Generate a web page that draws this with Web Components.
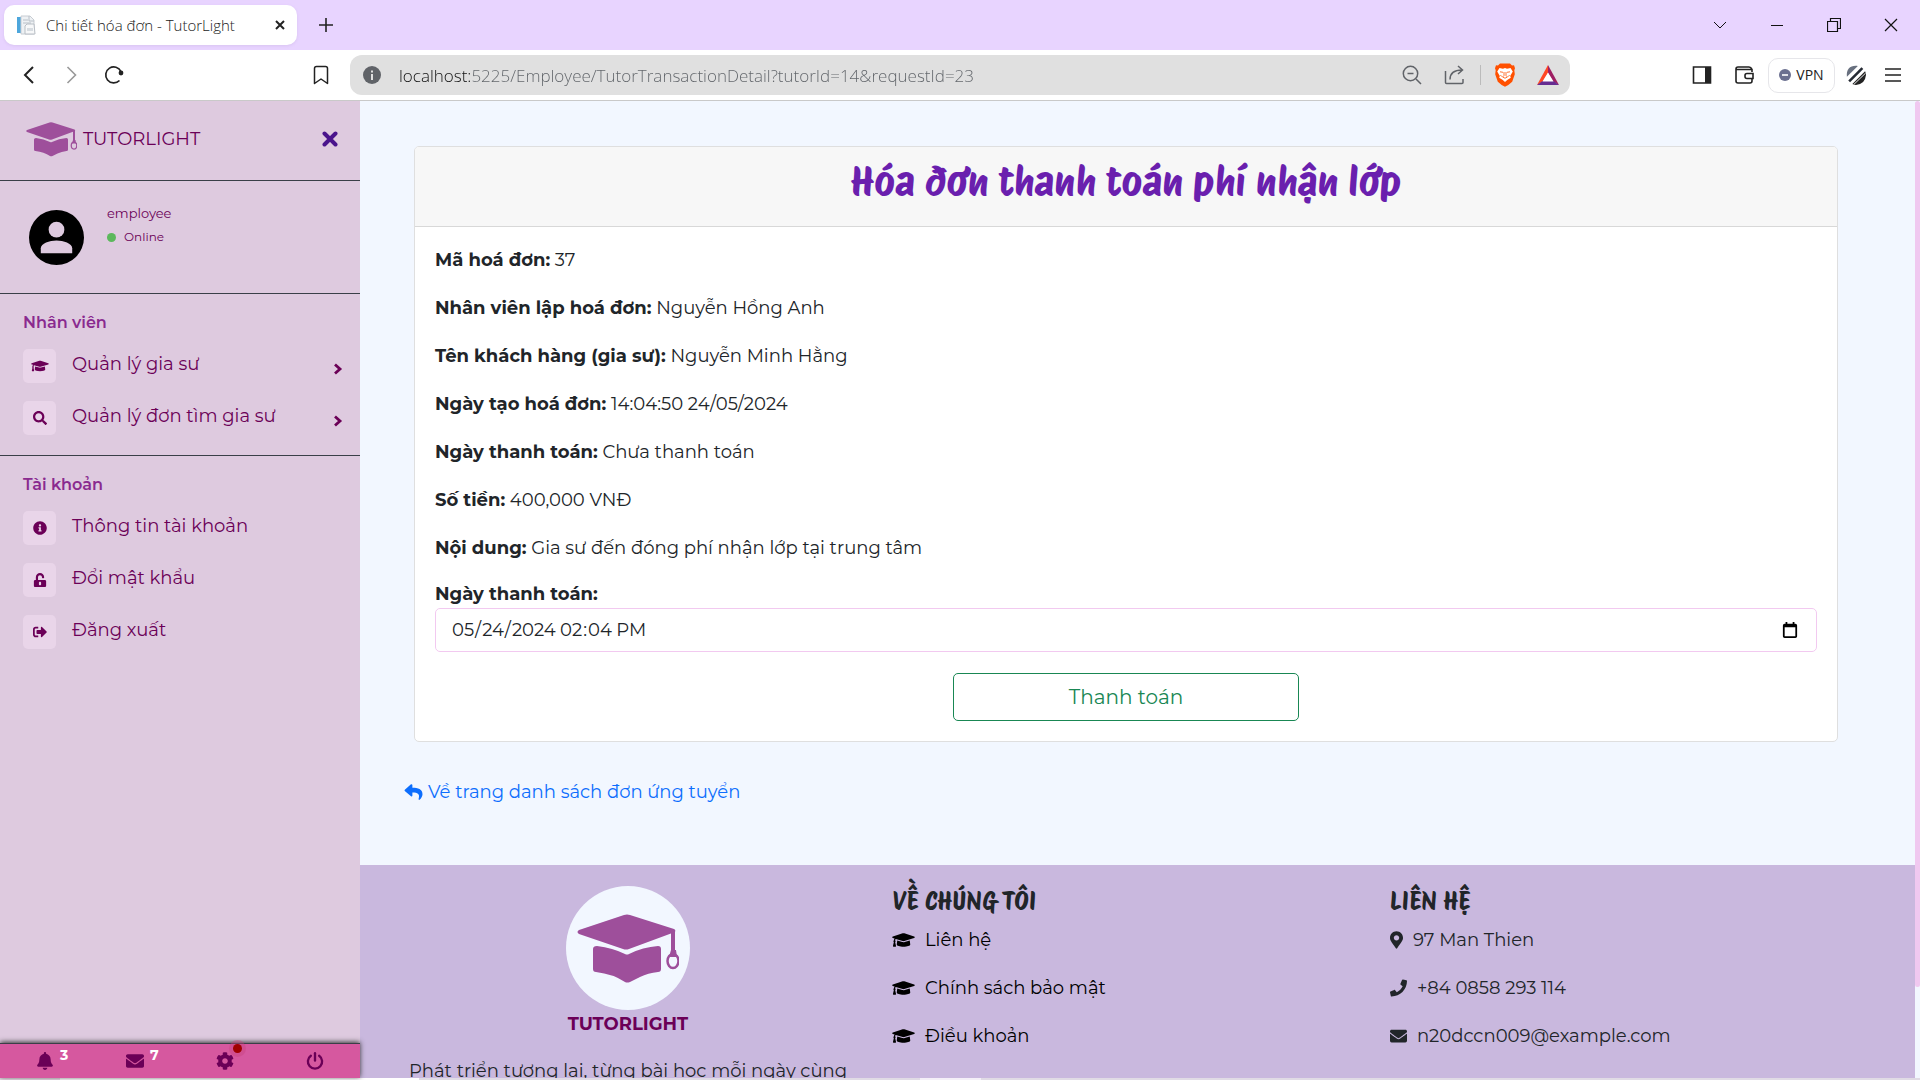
<!DOCTYPE html>
<html lang="vi">
<head>
<meta charset="utf-8">
<title>Chi tiết hóa đơn - TutorLight</title>
<style>
  html, body { margin: 0; height: 100%; }
  body {
    --body-font: Montserrat, Inter, "Noto Sans", sans-serif;
    --chrome-font: "Segoe UI", "Open Sans", "Noto Sans", sans-serif;
    --display-font: "Protest Riot", "Open Sans", sans-serif;
    --plum: #6b0057;
    display: flex; flex-direction: column; height: 100vh; overflow: hidden;
    font: 400 18px/28px var(--body-font); color: #212529; background: #f2f7ff;
  }
  .page { flex: 1; min-height: 0; display: flex; }
  .content { flex: 1; min-width: 0; overflow: hidden; display: flex; flex-direction: column; }
  .taskbar { height: 2px; flex: none; background: linear-gradient(90deg, #eadfe8 60px, #fff 60px 419px, #e0dbe5 419px 920px, #f4f0f8 920px 981px, #e0dbe5 981px); }
</style>
</head>
<body>
<browser-tabs>Chi tiết hóa đơn - TutorLight</browser-tabs>
<browser-toolbar url="localhost:5225/Employee/TutorTransactionDetail?tutorId=14&amp;requestId=23"></browser-toolbar>
<div class="page">
  <side-bar>
    <side-section heading="Nhân viên">
      <side-item icon="cap" more>Quản lý gia sư</side-item>
      <side-item icon="search" more>Quản lý đơn tìm gia sư</side-item>
    </side-section>
    <side-section heading="Tài khoản">
      <side-item icon="info">Thông tin tài khoản</side-item>
      <side-item icon="unlock">Đổi mật khẩu</side-item>
      <side-item icon="logout">Đăng xuất</side-item>
    </side-section>
  </side-bar>
  <div class="content">
    <invoice-card>
      <span slot="title">Hóa đơn thanh toán phí nhận lớp</span>
      <invoice-row label="Mã hoá đơn:">37</invoice-row>
      <invoice-row label="Nhân viên lập hoá đơn:">Nguyễn Hồng Anh</invoice-row>
      <invoice-row label="Tên khách hàng (gia sư):">Nguyễn Minh Hằng</invoice-row>
      <invoice-row label="Ngày tạo hoá đơn:">14:04:50 24/05/2024</invoice-row>
      <invoice-row label="Ngày thanh toán:">Chưa thanh toán</invoice-row>
      <invoice-row label="Số tiền:">400,000 VNĐ</invoice-row>
      <invoice-row label="Nội dung:">Gia sư đến đóng phí nhận lớp tại trung tâm</invoice-row>
    </invoice-card>
    <back-link>Về trang danh sách đơn ứng tuyển</back-link>
    <site-footer></site-footer>
  </div>
  <page-scrollbar></page-scrollbar>
</div>
<div class="taskbar"></div>

<script>
const ICONS = {
  cap: ['0 0 640 512', '<path d="M622.34 153.2L343.4 67.5c-15.2-4.67-31.6-4.67-46.79 0L17.66 153.2c-23.54 7.23-23.54 38.36 0 45.59l48.63 14.94c-10.67 13.19-17.23 29.28-17.88 46.9C38.78 266.15 32 276.11 32 288c0 10.78 5.68 19.85 13.86 25.65L20.33 428.53C18.11 438.52 25.71 448 35.94 448h56.11c10.24 0 17.84-9.48 15.62-19.47L82.14 313.65C90.32 307.85 96 298.78 96 288c0-11.57-6.47-21.25-15.66-26.87.76-15.02 8.44-28.3 20.69-36.72L296.6 284.5c9.06 2.78 26.44 6.25 46.79 0l278.95-85.7c23.55-7.24 23.55-38.36 0-45.6zM352.79 315.09c-28.53 8.76-52.84 3.92-65.59 0l-145.02-44.55L128 384c0 35.35 85.96 64 192 64s192-28.65 192-64l-14.18-113.47-145.03 44.56z"/>'],
  search: ['0 0 512 512', '<path d="M505 442.7L405.3 343c-4.5-4.5-10.6-7-17-7H372c27.6-35.3 44-79.7 44-128C416 93.1 322.9 0 208 0S0 93.1 0 208s93.1 208 208 208c48.3 0 92.7-16.4 128-44v16.3c0 6.4 2.5 12.5 7 17l99.7 99.7c9.4 9.4 24.6 9.4 33.9 0l28.3-28.3c9.4-9.4 9.4-24.6.1-34zM208 336c-70.7 0-128-57.2-128-128 0-70.7 57.2-128 128-128 70.7 0 128 57.2 128 128 0 70.7-57.2 128-128 128z"/>'],
  info: ['0 0 512 512', '<path d="M256 8C119.043 8 8 119.083 8 256c0 136.997 111.043 248 248 248s248-111.003 248-248C504 119.083 392.957 8 256 8zm0 110c23.196 0 42 18.804 42 42s-18.804 42-42 42-42-18.804-42-42 18.804-42 42-42zm56 254c0 6.627-5.373 12-12 12h-88c-6.627 0-12-5.373-12-12v-24c0-6.627 5.373-12 12-12h12v-64h-12c-6.627 0-12-5.373-12-12v-24c0-6.627 5.373-12 12-12h64c6.627 0 12 5.373 12 12v100h12c6.627 0 12 5.373 12 12v24z"/>'],
  unlock: ['0 0 448 512', '<path fill-rule="evenodd" d="M400 256H152v-104c0-40 32-72 71-72.500c40-.5 73 32 73 72v16c0 13.300 10.700 24 24 24h32c13.300 0 24-10.700 24-24v-16C376 68 307.500-.3 223.500 0 139.500.3 72 69.500 72 153.500V256H48c-26.500 0-48 21.500-48 48v160c0 26.500 21.500 48 48 48h352c26.500 0 48-21.500 48-48V304c0-26.500-21.500-48-48-48zM264 408c0 22.100-17.900 40-40 40s-40-17.900-40-40v-48c0-22.100 17.900-40 40-40s40 17.900 40 40v48z"/>'],
  logout: ['0 0 512 512', '<path d="M497 273L329 441c-15 15-41 4.500-41-17v-96H152c-13.300 0-24-10.700-24-24v-96c0-13.300 10.700-24 24-24h136V88c0-21.400 25.900-32 41-17l168 168c9.300 9.400 9.300 24.600 0 34zM192 436v-40c0-6.600-5.400-12-12-12H96c-17.700 0-32-14.300-32-32V160c0-17.700 14.300-32 32-32h84c6.600 0 12-5.400 12-12V76c0-6.600-5.400-12-12-12H96c-53 0-96 43-96 96v192c0 53 43 96 96 96h84c6.600 0 12-5.400 12-12z"/>'],
  bell: ['0 0 448 512', '<path d="M224 512c35.32 0 63.97-28.65 63.97-64H160.03c0 35.35 28.65 64 63.97 64zm215.39-149.71c-19.32-20.76-55.47-51.99-55.47-154.29 0-77.7-54.48-139.9-127.94-155.16V32c0-17.67-14.32-32-31.98-32s-31.98 14.33-31.98 32v20.84C118.56 68.1 64.08 130.3 64.08 208c0 102.3-36.15 133.53-55.47 154.29-6 6.45-8.66 14.16-8.61 21.71.11 16.4 12.98 32 32.1 32h383.8c19.12 0 32-15.6 32.1-32 .05-7.55-2.61-15.27-8.61-21.71z"/>'],
  mail: ['0 0 512 512', '<path d="M502.3 190.8c3.9-3.1 9.7-.2 9.7 4.7V400c0 26.5-21.5 48-48 48H48c-26.500 0-48-21.500-48-48V195.600c0-5 5.700-7.800 9.700-4.700 22.400 17.400 52.100 39.500 154.100 113.600 21.100 15.400 56.700 47.800 92.200 47.600 35.700.3 72-32.800 92.300-47.600 102-74.100 131.600-96.300 154-113.700zM256 320c23.200.4 56.600-29.200 73.400-41.400 132.700-96.300 142.800-104.700 173.400-128.700 5.800-4.500 9.200-11.500 9.200-18.900v-19c0-26.500-21.500-48-48-48H48c-26.500 0-48 21.500-48 48v19c0 7.400 3.400 14.300 9.200 18.900 30.600 23.900 40.700 32.400 173.400 128.700 16.800 12.200 50.200 41.800 73.400 41.400z"/>'],
  cog: ['0 0 512 512', '<path d="M487.400 315.700l-42.600-24.600c4.300-23.200 4.300-47 0-70.200l42.600-24.600c4.900-2.800 7.100-8.600 5.500-14-11.100-35.600-30-67.800-54.700-94.600-3.800-4.100-10-5.100-14.800-2.300L380.800 110c-17.900-15.400-38.500-27.300-60.800-35.100V25.800c0-5.600-3.900-10.500-9.400-11.700-36.700-8.200-74.300-7.800-109.200 0-5.500 1.200-9.400 6.100-9.400 11.700V75c-22.200 7.900-42.800 19.800-60.800 35.100L88.700 85.500c-4.900-2.800-11-1.900-14.800 2.300-24.700 26.700-43.600 58.900-54.700 94.600-1.700 5.400.6 11.200 5.500 14L67.300 221c-4.300 23.200-4.300 47 0 70.200l-42.600 24.600c-4.900 2.800-7.100 8.600-5.500 14 11.100 35.600 30 67.800 54.700 94.600 3.800 4.100 10 5.100 14.800 2.300l42.600-24.600c17.900 15.400 38.500 27.300 60.800 35.100v49.200c0 5.600 3.900 10.500 9.400 11.700 36.700 8.200 74.300 7.800 109.200 0 5.500-1.200 9.400-6.100 9.400-11.700v-49.200c22.200-7.900 42.800-19.800 60.800-35.100l42.600 24.600c4.900 2.800 11 1.900 14.800-2.300 24.700-26.700 43.600-58.900 54.700-94.600 1.500-5.500-.7-11.300-5.600-14.100zM256 336c-44.100 0-80-35.900-80-80s35.900-80 80-80 80 35.900 80 80-35.900 80-80 80z"/>'],
  power: ['0 0 20 20', '<g fill="none" stroke="currentColor" stroke-width="2.600" stroke-linecap="round"><path d="M5.400 4.200a7.900 7.900 0 1 0 9.200 0"/><path d="M10 1.400v8"/></g>'],
  pin: ['0 0 384 512', '<path d="M172.268 501.670C26.970 291.031 0 269.413 0 192 0 85.961 85.961 0 192 0s192 85.961 192 192c0 77.413-26.970 99.031-172.268 309.670-9.535 13.774-29.930 13.773-39.464 0zM192 272c44.183 0 80-35.817 80-80s-35.817-80-80-80-80 35.817-80 80 35.817 80 80 80z"/>'],
  phone: ['0 0 512 512', '<path d="M493.400 24.600l-104-24c-11.300-2.600-22.900 3.300-27.500 13.900l-48 112c-4.200 9.800-1.400 21.300 6.900 28l60.600 49.600c-36 76.700-98.900 140.500-177.200 177.200l-49.600-60.600c-6.800-8.300-18.200-11.100-28-6.900l-112 48C3.900 366.500-2 378.100.6 389.400l24 104C27.100 504.200 36.700 512 48 512c256.100 0 464-207.500 464-464 0-11.200-7.700-20.900-18.600-23.400z"/>'],
  reply: ['0 0 512 512', '<path d="M8.309 189.836L184.313 37.851C199.719 24.546 224 35.347 224 56.015v80.053c160.629 1.839 288 34.032 288 186.258 0 61.441-39.581 122.309-83.333 154.132-13.653 9.931-33.111-2.533-28.077-18.631 45.344-145.012-21.507-183.510-176.590-185.742V360c0 20.700-24.300 31.453-39.687 18.164l-176.004-152c-11.071-9.562-11.086-26.753 0-36.328z"/>'],
  chevron: ['0 0 12 14', '<path d="M3 2.500L8 7l-5 4.500" fill="none" stroke="currentColor" stroke-width="2.800"/>'],
  times: ['0 0 16 16', '<path d="M2.500 2.500l11 11m0-11l-11 11" fill="none" stroke="currentColor" stroke-width="4" stroke-linecap="round"/>'],
  calendar: ['0 0 16 18', '<path fill-rule="evenodd" d="M3 0h2v2h6V0h2v2h1q2 0 2 2v12q0 2-2 2H2q-2 0-2-2V4q0-2 2-2h1zM2 6v10h12V6z"/>'],
  logo: ['0 0 102 72', '<path d="M2 18L47 3q3-1 6 0l44 14q2 1 1 3l-46 17q-3 1-6 0L2 22q-3-2 0-4z"/><path d="M16 37q0-3 4-3 16 2 28 8 2 1 4 0 14-7 29-8 3 0 3 3v20q0 3-3 3-10 1-18 5l-10 5q-3 1-5 0-12-8-29-10-3 0-3-3z"/><path d="M96 19v22" fill="none" stroke="currentColor" stroke-width="4"/><path d="M94 38h5l1 7h-8z"/><ellipse cx="96" cy="49" rx="5.500" ry="7" fill="none" stroke="currentColor" stroke-width="2.500"/>'],
  avatar: ['0 0 56 56', '<circle cx="28" cy="28" r="28" fill="#000"/><circle cx="28" cy="20" r="8" fill="#decadf"/><path d="M12 44v-5c0-5 9-8 16-8s16 3 16 8v5z" fill="#decadf"/>'],
  files: ['0 0 20 20', '<path d="M1 2h4v16H1z" fill="#4da6dc"/><path d="M5 1h9l4 4v14H5z" fill="#eef1f4" stroke="#c7ccd2"/><path d="M13 1v5h5M7 5h5M7 8h8" fill="none" stroke="#b9c0c8"/><path d="M9 11l2-2h7l1 10H9z" fill="#f7f8f9" stroke="#b8bec5"/><path d="M11 13h6v3h-6z" fill="#d7dce1"/>'],
  tabclose: ['0 0 10 10', '<path d="M1 1l8 8M9 1L1 9" fill="none" stroke="currentColor" stroke-width="2"/>'],
  plus: ['0 0 16 16', '<path d="M8 1v14M1 8h14" fill="none" stroke="currentColor" stroke-width="1.600"/>'],
  down: ['0 0 14 14', '<path d="M1 4l6 6 6-6" fill="none" stroke="currentColor" stroke-width="1"/>'],
  min: ['0 0 14 14', '<path d="M1 7.500h12" stroke="currentColor"/>'],
  restore: ['0 0 14 14', '<path d="M.5 3.500h10v10H.5zM3.500 3.500v-3h10v10h-3" fill="none" stroke="currentColor" stroke-width="1.200"/>'],
  close: ['0 0 14 14', '<path d="M1 1l12 12M13 1L1 13" fill="none" stroke="currentColor" stroke-width="1.200"/>'],
  back: ['0 0 20 20', '<path d="M13 2L5 10l8 8" fill="none" stroke="currentColor" stroke-width="2"/>'],
  forward: ['0 0 20 20', '<path d="M5.500 2l8 8-8 8" fill="none" stroke="currentColor" stroke-width="1.600"/>'],
  reload: ['0 0 20 20', '<path d="M15.500 15.500A8 8 0 1 1 17 6.500" fill="none" stroke="currentColor" stroke-width="1.700"/><circle cx="17" cy="8" r="2.400"/>'],
  bookmark: ['0 0 20 20', '<path d="M3.500 18.500v-15q0-2 2-2h9q2 0 2 2v15L10 14z" fill="none" stroke="currentColor" stroke-width="1.500" stroke-linejoin="round"/>'],
  site: ['0 0 18 18', '<circle cx="9" cy="9" r="9"/><path d="M9 4.500v2M9 8v6" stroke="#e0e0e0" stroke-width="2"/>'],
  zoom: ['0 0 20 20', '<g fill="none" stroke="currentColor" stroke-width="1.500"><circle cx="8.500" cy="8.500" r="7.200"/><path d="M5.500 8.500h6M14 14l5 5"/></g>'],
  share: ['0 0 20 20', '<g fill="none" stroke="currentColor" stroke-width="1.500"><path d="M1.500 6v11.500q0 1 1 1h15.500q1 0 1-1V14"/><path d="M6 14.500c0-7 4-9.500 12-9.500M14 1l4.500 4L14 9"/></g>'],
  brave: ['0 0 20 24', '<path d="M5 .5h10l2 2 2-.2 1 3-.7 2 .5 4-2.600 7.500Q14 22 10 23.800 6 22 2.800 18.800L.2 11.300l.5-4L0 5.300l1-3 2 .2z" fill="#ff5000"/><path d="M4.500 5l3.500.8 2-.8 2 .8 3.500-.8 2.300 3.500-2.600 4.500.6 1.800-3.600 2.200L10 19l-2.200-2-3.600-2.200.6-1.800-2.600-4.500z" fill="#fff"/><path d="M5 8.800l3 .5M15 8.800l-3 .5M9 9v3.500L7.500 14l2.500 1.200 2.500-1.200-1.500-1.500V9M5.500 12l1 1.500M14.500 12l-1 1.500" fill="none" stroke="#ff5000" stroke-width=".8"/>'],
  bat: ['0 0 22 20', '<path d="M11 0L0 20l6-3.500L11 8z" fill="#ff4724"/><path d="M11 0l11 20-6-3.500L11 8z" fill="#9e1f63"/><path d="M0 20h22l-5.500-4h-11z" fill="#662d91"/><path d="M11 7.500l5.500 9h-11z" fill="#fff"/>'],
  panel: ['0 0 20 20', '<path d="M1.500 2h17v16h-17z" fill="none" stroke="currentColor" stroke-width="1.600"/><path d="M13 2h6v16h-6z"/>'],
  wallet: ['0 0 20 20', '<g fill="none" stroke="currentColor" stroke-width="1.600"><path d="M18 7V4.500H2V16q0 2 2 2h12q2 0 2-2v-2M2 5V4q0-2 2-2h11q2 0 3 2.500"/><path d="M19 8.500h-6q-2 0-2 2v1q0 2 2 2h6z"/></g>'],
  vpn: ['0 0 12 12', '<circle cx="6" cy="6" r="6" fill="#6b7090"/><path d="M3 6h6" stroke="#fff" stroke-width="1.600"/>'],
  leo: ['0 0 22 22', '<path d="M1 13C0 4 5 0 13 1z" fill="#68707f"/><path d="M2.500 17L17 2.500q1.500 1 2 2L4.500 19z" fill="#252a33"/><path d="M7 21L21 7q1 2 1 4-1 10-11 11-2 0-4-1z"/><path d="M8.500 21.500L21.500 9" stroke="#fff" stroke-width="1"/>'],
  menu: ['0 0 18 16', '<path d="M1 2h16M1 8h16M1 14h16" stroke="currentColor" stroke-width="1.600"/>'],
};

class UiIcon extends HTMLElement {
  constructor() { super(); this.attachShadow({ mode: 'open' }); }
  connectedCallback() {
    const [box, art] = ICONS[this.getAttribute('name')];
    this.shadowRoot.innerHTML = `<style>:host{display:inline-flex;flex:none;width:16px;height:16px}svg{width:100%;height:100%;fill:currentColor}</style><svg viewBox="${box}" aria-hidden="true">${art}</svg>`;
  }
}
customElements.define('ui-icon', UiIcon);

function define(name, render) {
  customElements.define(name, class extends HTMLElement {
    constructor() { super(); this.attachShadow({ mode: 'open' }); }
    connectedCallback() {
      this.shadowRoot.innerHTML = '<style>*{box-sizing:border-box}button{font:inherit;color:inherit;border:0;background:none;padding:0;display:flex;align-items:center;justify-content:center}a{color:inherit;text-decoration:none}h1,h2,h3,p,ul{margin:0;padding:0;list-style:none}</style>' + render(this);
    }
  });
}

define('browser-tabs', () => `<style>
  :host{display:flex;flex:none;height:50px;box-sizing:border-box;padding:5px 22px 5px 4px;align-items:center;background:#e8d4ff;color:#222;font:350 15px/20px var(--chrome-font)}
  .tab{display:flex;align-items:center;width:293px;height:40px;padding:0 12px;background:#fff;border-radius:10px;box-shadow:0 1px 3px #bda8d855}
  .tab span{flex:1;margin-left:10px}
  .tab ui-icon{width:20px;height:20px}.tab button ui-icon{width:10px;height:10px}
  .new{margin-left:21px}
  .win{margin-left:auto;display:flex;gap:43px;color:#111}.win ui-icon{width:14px;height:14px}
</style><div class="tab"><ui-icon name="files"></ui-icon><span><slot></slot></span><button aria-label="Close tab"><ui-icon name="tabclose"></ui-icon></button></div>
<button class="new" aria-label="New tab"><ui-icon name="plus"></ui-icon></button>
<div class="win"><button aria-label="Search tabs"><ui-icon name="down"></ui-icon></button><button aria-label="Minimize"><ui-icon name="min"></ui-icon></button><button aria-label="Restore"><ui-icon name="restore"></ui-icon></button><button aria-label="Close"><ui-icon name="close"></ui-icon></button></div>`);

define('browser-toolbar', el => `<style>
  :host{display:flex;flex:none;height:51px;box-sizing:border-box;border-bottom:1px solid #c9c9c9;align-items:center;background:#fff;color:#222;padding:0 18px 0 20px;font:400 14px/20px var(--chrome-font)}
  ui-icon{width:20px;height:20px}
  .nav{display:flex;gap:22px;width:311px;flex:none}.nav :nth-child(2){color:#999}.nav :last-child{margin-left:auto}
  .bar{flex:0 1 1220px;min-width:0;height:40px;margin-left:19px;padding:0 11px 0 13px;display:flex;align-items:center;background:#e0e0e0;border-radius:12px;color:#606368}
  .bar ui-icon[name=site]{width:18px;height:18px}
  input{flex:1;min-width:0;margin:0 18px;padding:0;border:0;outline:0;height:30px;font:350 17px/24px var(--chrome-font);color:#5f6368;-webkit-text-fill-color:transparent;background:linear-gradient(90deg,#111 72px,#5f6368 72px);-webkit-background-clip:text;background-clip:text}
  .acts{display:flex;align-items:center;gap:22px}
  .acts i{width:1px;height:20px;background:#bbb;margin:0 -8px 0 -6px}
  .acts ui-icon[name=brave]{width:20px;height:24px}.acts ui-icon[name=bat]{width:22px}
  .right{margin-left:auto;display:flex;align-items:center;gap:22px}
  .vpn{width:67px;height:35px;margin:0 -11px 0 -8px;border:1px solid #e6e6ea;border-radius:10px;gap:5px}
  .vpn ui-icon{width:12px;height:12px}.right ui-icon[name=menu]{width:18px;height:16px}
  .right button:last-child{margin-left:-4px}
</style><div class="nav"><button aria-label="Back"><ui-icon name="back"></ui-icon></button><button aria-label="Forward"><ui-icon name="forward"></ui-icon></button><button aria-label="Reload"><ui-icon name="reload"></ui-icon></button><button aria-label="Bookmark"><ui-icon name="bookmark"></ui-icon></button></div>
<div class="bar"><ui-icon name="site"></ui-icon><input type="text" aria-label="Address" value="${el.getAttribute('url').replace('&', '&amp;')}"><div class="acts"><button aria-label="Zoom"><ui-icon name="zoom"></ui-icon></button><button aria-label="Share"><ui-icon name="share"></ui-icon></button><i></i><button aria-label="Shields"><ui-icon name="brave"></ui-icon></button><button aria-label="Rewards"><ui-icon name="bat"></ui-icon></button></div></div>
<div class="right"><button aria-label="Side panel"><ui-icon name="panel"></ui-icon></button><button aria-label="Wallet"><ui-icon name="wallet"></ui-icon></button><button class="vpn"><ui-icon name="vpn"></ui-icon>VPN</button><button aria-label="Assistant"><ui-icon name="leo"></ui-icon></button><button aria-label="Menu"><ui-icon name="menu"></ui-icon></button></div>`);

define('side-bar', () => `<style>
  :host{display:flex;flex-direction:column;flex:none;width:360px;background:#decadf;color:var(--plum)}
  .brand{display:flex;align-items:center;height:80px;padding:0 22px 3px 26px;border-bottom:1px solid #3a3f48;font-size:18px}
  .brand a{display:flex;align-items:center;gap:6px}
  .brand ui-icon{width:51px;height:36px;color:#9e4f9b}
  .brand button{margin-left:auto}.brand button ui-icon{width:16px;height:16px;color:#4a148c}
  .user{display:flex;gap:23px;height:113px;padding:28px 29px;border-bottom:1px solid #3a3f48;font-size:13px;line-height:24px}
  .user ui-icon{width:55px;height:55px;margin-top:1px}
  .names{margin-top:-8px}
  .on{display:flex;align-items:center;gap:8px;font-size:12px}.on i{width:9px;height:9px;border-radius:50%;background:#5cb85c}
  nav{flex:1}
  .foot{display:flex;height:35px;border-top:1px solid #3a3f48;background:#d6589f;box-shadow:0 -1px 5px #333;z-index:1}
  .foot button{flex:1;position:relative}.foot ui-icon{width:18px;height:18px}
  .foot b{position:absolute;left:60px;top:2px;font:700 14px/18px var(--body-font);color:#fff}
  .foot i{position:absolute;left:53px;top:0;width:9px;height:9px;border-radius:50%;background:#a00000;box-shadow:0 0 0 4px #c9427c66}
</style><div class="brand"><a href="#"><ui-icon name="logo"></ui-icon>TUTORLIGHT</a><button aria-label="Close sidebar"><ui-icon name="times"></ui-icon></button></div>
<div class="user"><ui-icon name="avatar"></ui-icon><div class="names"><div>employee</div><div class="on"><i></i>Online</div></div></div>
<nav><slot></slot></nav>
<div class="foot"><button aria-label="Notifications"><ui-icon name="bell"></ui-icon><b>3</b></button><button aria-label="Messages"><ui-icon name="mail"></ui-icon><b>7</b></button><button aria-label="Settings"><ui-icon name="cog"></ui-icon><i></i></button><button aria-label="Power"><ui-icon name="power"></ui-icon></button></div>`);

define('side-section', el => `<style>
  :host{display:block;padding-bottom:11px;border-bottom:1px solid #3a3f48}
  :host(:last-of-type){border-bottom:0}
  h3{font:600 16px/20px var(--body-font);color:#8a2a8f;padding:19px 23px 7px}
</style><h3>${el.getAttribute('heading')}</h3><slot></slot>`);

define('side-item', el => `<style>
  :host{display:block}
  a{display:flex;align-items:center;height:52px;padding:0 16px 0 23px;font-size:18px;line-height:24px}
  .box{display:flex;align-items:center;justify-content:center;width:33px;height:34px;margin-right:16px;border-radius:5px;background:#e9d5e9}
  .box ui-icon{width:${el.getAttribute('icon') === 'cap' ? 18 : 14}px;height:14px}
  .text{flex:1;padding-bottom:4px}
  .more{width:12px;height:14px;margin-top:6px}
</style><a href="#"><span class="box"><ui-icon name="${el.getAttribute('icon')}"></ui-icon></span><span class="text"><slot></slot></span>${el.hasAttribute('more') ? '<ui-icon class="more" name="chevron"></ui-icon>' : ''}</a>`);

define('invoice-card', () => `<style>
  :host{display:block;flex:none;margin:45px 77px 0 54px;border:1px solid #dfdfdf;border-radius:5px;background:#fff;overflow:hidden}
  h1{height:80px;padding-top:8px;border-bottom:1px solid #d8d8d8;background:#f7f7f7;text-align:center;font:500 40px/52px var(--display-font);color:#6a1fae}
  .body{padding:19px 20px 20px}
  label{display:block;font-weight:700}
  .rows{display:flex;flex-direction:column;gap:20px;padding-bottom:18px}
  .field{display:flex;align-items:center;height:44px;padding:0 18px 0 15px;gap:2px;border:1px solid #f2c9f0;border-radius:5px}
  .field ui-icon{color:#000}
  input{padding:0;border:0;background:none;font:inherit;color:inherit;outline:0}
  input::-webkit-calendar-picker-indicator{display:none}
  #paid{width:106px}
  #paid-time{flex:1}
  .pay{width:25%;height:48px;margin:21px auto 0;border:1px solid #198754;border-radius:5px;color:#198754;font-size:20px}
</style><h1><slot name="title"></slot></h1><div class="body"><div class="rows"><slot></slot></div><label for="paid">Ngày thanh toán:</label><div class="field"><input id="paid" type="date" value="2024-05-24"><input id="paid-time" type="time" value="14:04" aria-label="Time"><button aria-label="Calendar"><ui-icon name="calendar"></ui-icon></button></div><button class="pay">Thanh toán</button></div>`);

define('invoice-row', el => `<style>:host{display:block}b{font-weight:700}</style><b>${el.getAttribute('label')}</b> <slot></slot>`);

define('back-link', () => `<style>
  :host{display:block;flex:none;margin:36px 44px 56px;color:#0d6efd;font-size:18px}
  a{display:inline-flex;align-items:center;gap:5px}ui-icon{width:19px;height:18px}
</style><a href="#"><ui-icon name="reply"></ui-icon><slot></slot></a>`);

define('site-footer', () => `<style>
  :host{display:grid;grid-template-columns:repeat(3,1fr);flex:1 0 auto;padding:21px 42px 0 19px;background:#c9b8de}
  section{padding:0 15px}
  .about{display:flex;flex-direction:column;align-items:center;text-align:center}
  .disc{display:flex;align-items:center;justify-content:center;width:124px;height:124px;border-radius:50%;background:#f2f7ff}
  .disc ui-icon{width:102px;height:72px;color:#9e4f9b}
  .about b{font-size:18px;line-height:28px;font-weight:700;color:var(--plum)}
  .about p{margin-top:19px;font-size:18px;white-space:nowrap}
  h2{font:500 25px/30px var(--display-font)}
  li{display:flex;align-items:center;height:28px;margin-bottom:20px;gap:10px;font-size:18px}
  ul{padding-top:10px}
  .links{color:#000}.links ui-icon{width:23px;height:18px}
  .contact ui-icon{width:17px;height:18px}.contact ui-icon[name=pin]{width:13px}
  li a{display:flex;align-items:center;gap:10px}
</style><section class="about"><span class="disc"><ui-icon name="logo"></ui-icon></span><b>TUTORLIGHT</b><p>Phát triển tương lai, từng bài học mỗi ngày cùng</p></section>
<section><h2>VỀ CHÚNG TÔI</h2><ul class="links"><li><a href="#"><ui-icon name="cap"></ui-icon>Liên hệ</a></li><li><a href="#"><ui-icon name="cap"></ui-icon>Chính sách bảo mật</a></li><li><a href="#"><ui-icon name="cap"></ui-icon>Điều khoản</a></li></ul></section>
<section><h2>LIÊN HỆ</h2><ul class="contact"><li><ui-icon name="pin"></ui-icon>97 Man Thien</li><li><ui-icon name="phone"></ui-icon>+84 0858 293 114</li><li><ui-icon name="mail"></ui-icon>n20dccn009@example.com</li></ul></section>`);

define('page-scrollbar', () => `<style>:host{display:block;flex:none;width:5px;background:#f2f7ff}i{display:block;height:calc(91% - 3px);border-radius:3px;background:#f0c8f0}</style><i></i>`);
</script>
</body>
</html>
